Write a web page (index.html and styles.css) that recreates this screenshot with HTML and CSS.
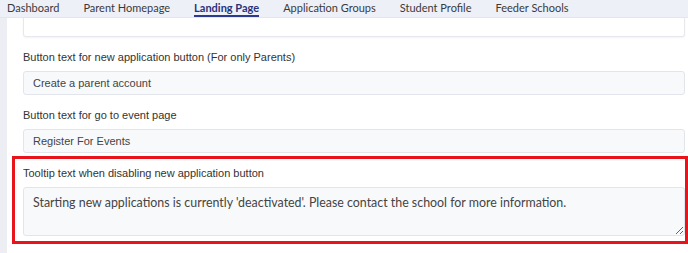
FILE: index.html
```html
<!DOCTYPE html>
<html lang="en">
<head>
    <meta charset="UTF-8">
    <meta name="viewport" content="width=device-width, initial-scale=1.0">
    <title>Landing Page</title>
    <link rel="stylesheet" href="styles.css">
</head>
<body>
    <nav class="tabs">
        <a class="tab">Dashboard</a>
        <a class="tab">Parent Homepage</a>
        <a class="tab active">Landing Page</a>
        <a class="tab">Application Groups</a>
        <a class="tab">Student Profile</a>
        <a class="tab">Feeder Schools</a>
    </nav>

    <div class="page">
        <div class="sidebar"></div>
        <div class="content">
            <div class="prev-box"></div>

            <div class="field">
                <label>Button text for new application button (For only Parents)</label>
                <input type="text" value="Create a parent account">
            </div>

            <div class="field">
                <label>Button text for go to event page</label>
                <input type="text" value="Register For Events">
            </div>

            <div class="field highlight">
                <label>Tooltip text when disabling new application button</label>
                <textarea>Starting new applications is currently 'deactivated'. Please contact the school for more information.</textarea>
            </div>
        </div>
    </div>
</body>
</html>
```

FILE: styles.css
```css
body {
    margin: 0;
    font-family: "Liberation Sans", Arial, sans-serif;
    color: #333;
    background: #fff;
    height: 253px;
    overflow: hidden;
    display: flex;
    flex-direction: column;
}

.tabs {
    display: flex;
    gap: 24px;
    height: 18px;
    padding-left: 7px;
    background: #eef0f8;
    border-bottom: 1px solid #e3e6ef;
    box-sizing: border-box;
}

.tab {
    font-family: Lato, "Liberation Sans", sans-serif;
    font-size: 11px;
    line-height: 16px;
    color: #3a3a3a;
    border-bottom: 2px solid transparent;
}

.tab.active {
    font-weight: bold;
    color: #2a3278;
    border-bottom-color: #2b3990;
}

.page {
    flex: 1;
    display: flex;
}

.sidebar {
    width: 7px;
    background: #eceef4;
}

.content {
    flex: 1;
    padding: 0 3px 0 16px;
}

.prev-box {
    height: 19px;
    border: 1px solid #e6e8ee;
    border-top: none;
    border-radius: 0 0 3px 3px;
    box-shadow: 0 1px 2px rgba(0, 0, 0, 0.05);
    box-sizing: border-box;
}

.field {
    margin-top: 13px;
}

.field label {
    display: block;
    font-size: 11px;
    line-height: 14px;
    margin-bottom: 7px;
}

.field input,
.field textarea {
    display: block;
    width: 100%;
    box-sizing: border-box;
    background: #f8f9fb;
    border: 1px solid #e2e5ec;
    border-radius: 3px;
    color: #444;
    margin: 0;
}

.field input {
    height: 24px;
    padding: 0 9px;
    font-family: "Liberation Sans", Arial, sans-serif;
    font-size: 11px;
}

.field textarea {
    height: 49px;
    padding: 7px 9px;
    font-family: Lato, "Liberation Sans", sans-serif;
    font-size: 12.4px;
    line-height: 16px;
    resize: vertical;
}

.highlight {
    margin: 3px -3px 0 -11px;
    padding: 7px 0 5px 8px;
    border: 3px solid #e8141c;
}
```
